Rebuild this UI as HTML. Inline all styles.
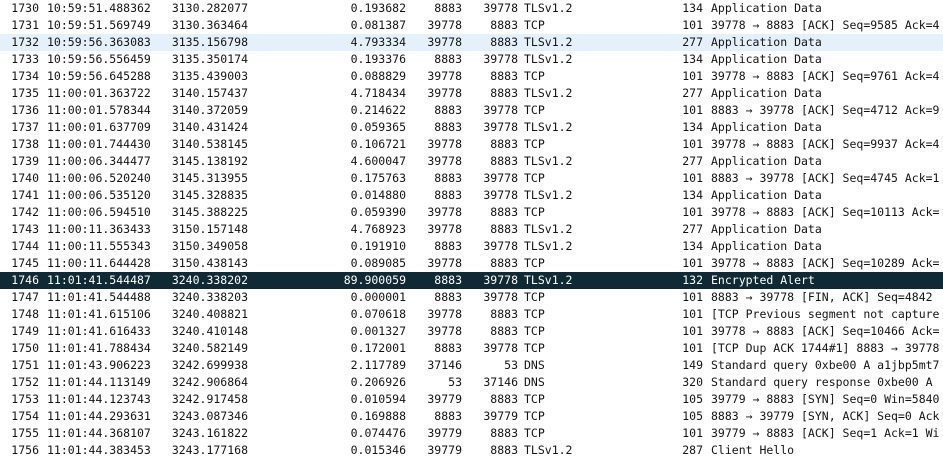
<!DOCTYPE html>
<html><head><meta charset="utf-8"><style>
html,body{margin:0;padding:0;background:#fff;width:943px;height:461px;overflow:hidden}
body{font-family:"DejaVu Sans Mono","Liberation Mono",monospace;font-size:11.5px;color:#141414}
.r{position:relative;height:17px;line-height:17px;white-space:pre}
.r span{position:absolute;top:0}
.n{right:904px}.t{left:47px}.a{right:695px}.d{right:537px}.s{right:481px}.p{right:425px}.pr{left:524px}.l{right:240px}.i{left:711px}
.hl{background:#e4f0fb}
.sel{background:#0f2a35;color:#fff}
</style></head><body>
<div class="r"><span class="n">1730</span><span class="t">10:59:51.488362</span><span class="a">3130.282077</span><span class="d">0.193682</span><span class="s">8883</span><span class="p">39778</span><span class="pr">TLSv1.2</span><span class="l">134</span><span class="i">Application Data</span></div>
<div class="r"><span class="n">1731</span><span class="t">10:59:51.569749</span><span class="a">3130.363464</span><span class="d">0.081387</span><span class="s">39778</span><span class="p">8883</span><span class="pr">TCP</span><span class="l">101</span><span class="i">39778 → 8883 [ACK] Seq=9585 Ack=4</span></div>
<div class="r hl"><span class="n">1732</span><span class="t">10:59:56.363083</span><span class="a">3135.156798</span><span class="d">4.793334</span><span class="s">39778</span><span class="p">8883</span><span class="pr">TLSv1.2</span><span class="l">277</span><span class="i">Application Data</span></div>
<div class="r"><span class="n">1733</span><span class="t">10:59:56.556459</span><span class="a">3135.350174</span><span class="d">0.193376</span><span class="s">8883</span><span class="p">39778</span><span class="pr">TLSv1.2</span><span class="l">134</span><span class="i">Application Data</span></div>
<div class="r"><span class="n">1734</span><span class="t">10:59:56.645288</span><span class="a">3135.439003</span><span class="d">0.088829</span><span class="s">39778</span><span class="p">8883</span><span class="pr">TCP</span><span class="l">101</span><span class="i">39778 → 8883 [ACK] Seq=9761 Ack=4</span></div>
<div class="r"><span class="n">1735</span><span class="t">11:00:01.363722</span><span class="a">3140.157437</span><span class="d">4.718434</span><span class="s">39778</span><span class="p">8883</span><span class="pr">TLSv1.2</span><span class="l">277</span><span class="i">Application Data</span></div>
<div class="r"><span class="n">1736</span><span class="t">11:00:01.578344</span><span class="a">3140.372059</span><span class="d">0.214622</span><span class="s">8883</span><span class="p">39778</span><span class="pr">TCP</span><span class="l">101</span><span class="i">8883 → 39778 [ACK] Seq=4712 Ack=9</span></div>
<div class="r"><span class="n">1737</span><span class="t">11:00:01.637709</span><span class="a">3140.431424</span><span class="d">0.059365</span><span class="s">8883</span><span class="p">39778</span><span class="pr">TLSv1.2</span><span class="l">134</span><span class="i">Application Data</span></div>
<div class="r"><span class="n">1738</span><span class="t">11:00:01.744430</span><span class="a">3140.538145</span><span class="d">0.106721</span><span class="s">39778</span><span class="p">8883</span><span class="pr">TCP</span><span class="l">101</span><span class="i">39778 → 8883 [ACK] Seq=9937 Ack=4</span></div>
<div class="r"><span class="n">1739</span><span class="t">11:00:06.344477</span><span class="a">3145.138192</span><span class="d">4.600047</span><span class="s">39778</span><span class="p">8883</span><span class="pr">TLSv1.2</span><span class="l">277</span><span class="i">Application Data</span></div>
<div class="r"><span class="n">1740</span><span class="t">11:00:06.520240</span><span class="a">3145.313955</span><span class="d">0.175763</span><span class="s">8883</span><span class="p">39778</span><span class="pr">TCP</span><span class="l">101</span><span class="i">8883 → 39778 [ACK] Seq=4745 Ack=1</span></div>
<div class="r"><span class="n">1741</span><span class="t">11:00:06.535120</span><span class="a">3145.328835</span><span class="d">0.014880</span><span class="s">8883</span><span class="p">39778</span><span class="pr">TLSv1.2</span><span class="l">134</span><span class="i">Application Data</span></div>
<div class="r"><span class="n">1742</span><span class="t">11:00:06.594510</span><span class="a">3145.388225</span><span class="d">0.059390</span><span class="s">39778</span><span class="p">8883</span><span class="pr">TCP</span><span class="l">101</span><span class="i">39778 → 8883 [ACK] Seq=10113 Ack=</span></div>
<div class="r"><span class="n">1743</span><span class="t">11:00:11.363433</span><span class="a">3150.157148</span><span class="d">4.768923</span><span class="s">39778</span><span class="p">8883</span><span class="pr">TLSv1.2</span><span class="l">277</span><span class="i">Application Data</span></div>
<div class="r"><span class="n">1744</span><span class="t">11:00:11.555343</span><span class="a">3150.349058</span><span class="d">0.191910</span><span class="s">8883</span><span class="p">39778</span><span class="pr">TLSv1.2</span><span class="l">134</span><span class="i">Application Data</span></div>
<div class="r"><span class="n">1745</span><span class="t">11:00:11.644428</span><span class="a">3150.438143</span><span class="d">0.089085</span><span class="s">39778</span><span class="p">8883</span><span class="pr">TCP</span><span class="l">101</span><span class="i">39778 → 8883 [ACK] Seq=10289 Ack=</span></div>
<div class="r sel"><span class="n">1746</span><span class="t">11:01:41.544487</span><span class="a">3240.338202</span><span class="d">89.900059</span><span class="s">8883</span><span class="p">39778</span><span class="pr">TLSv1.2</span><span class="l">132</span><span class="i">Encrypted Alert</span></div>
<div class="r"><span class="n">1747</span><span class="t">11:01:41.544488</span><span class="a">3240.338203</span><span class="d">0.000001</span><span class="s">8883</span><span class="p">39778</span><span class="pr">TCP</span><span class="l">101</span><span class="i">8883 → 39778 [FIN, ACK] Seq=4842</span></div>
<div class="r"><span class="n">1748</span><span class="t">11:01:41.615106</span><span class="a">3240.408821</span><span class="d">0.070618</span><span class="s">39778</span><span class="p">8883</span><span class="pr">TCP</span><span class="l">101</span><span class="i">[TCP Previous segment not capture</span></div>
<div class="r"><span class="n">1749</span><span class="t">11:01:41.616433</span><span class="a">3240.410148</span><span class="d">0.001327</span><span class="s">39778</span><span class="p">8883</span><span class="pr">TCP</span><span class="l">101</span><span class="i">39778 → 8883 [ACK] Seq=10466 Ack=</span></div>
<div class="r"><span class="n">1750</span><span class="t">11:01:41.788434</span><span class="a">3240.582149</span><span class="d">0.172001</span><span class="s">8883</span><span class="p">39778</span><span class="pr">TCP</span><span class="l">101</span><span class="i">[TCP Dup ACK 1744#1] 8883 → 39778</span></div>
<div class="r"><span class="n">1751</span><span class="t">11:01:43.906223</span><span class="a">3242.699938</span><span class="d">2.117789</span><span class="s">37146</span><span class="p">53</span><span class="pr">DNS</span><span class="l">149</span><span class="i">Standard query 0xbe00 A a1jbp5mt7</span></div>
<div class="r"><span class="n">1752</span><span class="t">11:01:44.113149</span><span class="a">3242.906864</span><span class="d">0.206926</span><span class="s">53</span><span class="p">37146</span><span class="pr">DNS</span><span class="l">320</span><span class="i">Standard query response 0xbe00 A </span></div>
<div class="r"><span class="n">1753</span><span class="t">11:01:44.123743</span><span class="a">3242.917458</span><span class="d">0.010594</span><span class="s">39779</span><span class="p">8883</span><span class="pr">TCP</span><span class="l">105</span><span class="i">39779 → 8883 [SYN] Seq=0 Win=5840</span></div>
<div class="r"><span class="n">1754</span><span class="t">11:01:44.293631</span><span class="a">3243.087346</span><span class="d">0.169888</span><span class="s">8883</span><span class="p">39779</span><span class="pr">TCP</span><span class="l">105</span><span class="i">8883 → 39779 [SYN, ACK] Seq=0 Ack</span></div>
<div class="r"><span class="n">1755</span><span class="t">11:01:44.368107</span><span class="a">3243.161822</span><span class="d">0.074476</span><span class="s">39779</span><span class="p">8883</span><span class="pr">TCP</span><span class="l">101</span><span class="i">39779 → 8883 [ACK] Seq=1 Ack=1 Wi</span></div>
<div class="r"><span class="n">1756</span><span class="t">11:01:44.383453</span><span class="a">3243.177168</span><span class="d">0.015346</span><span class="s">39779</span><span class="p">8883</span><span class="pr">TLSv1.2</span><span class="l">287</span><span class="i">Client Hello</span></div>
</body></html>
